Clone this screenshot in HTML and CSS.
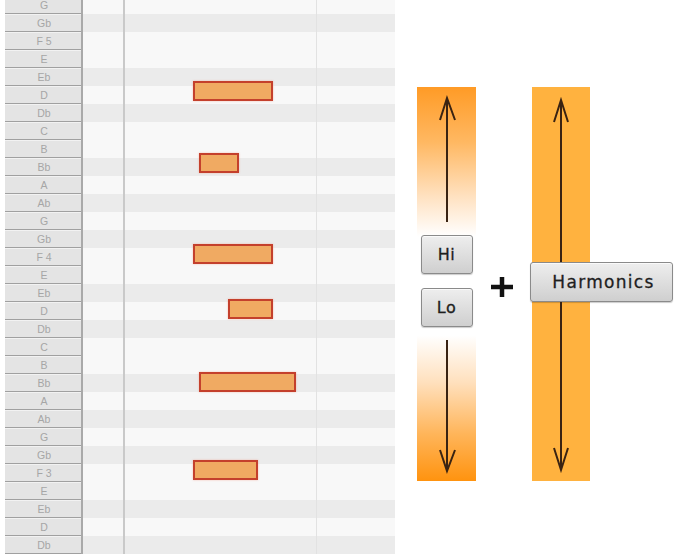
FILE: index.html
```html
<!DOCTYPE html>
<html lang="en">
  <head>
    <meta charset="UTF-8" />
    <meta name="viewport" content="width=device-width, initial-scale=1.0" />
    <title>Piano roll - Hi / Lo + Harmonics</title>
    <link rel="stylesheet" href="styles.css">
  </head>
  <body>
    <div class="page">
      <!-- ========== piano roll ========== -->
      <div class="roll">
        <div class="keys">
          <div class="key">G</div>
          <div class="key">Gb</div>
          <div class="key">F 5</div>
          <div class="key">E</div>
          <div class="key">Eb</div>
          <div class="key">D</div>
          <div class="key">Db</div>
          <div class="key">C</div>
          <div class="key">B</div>
          <div class="key">Bb</div>
          <div class="key">A</div>
          <div class="key">Ab</div>
          <div class="key">G</div>
          <div class="key">Gb</div>
          <div class="key">F 4</div>
          <div class="key">E</div>
          <div class="key">Eb</div>
          <div class="key">D</div>
          <div class="key">Db</div>
          <div class="key">C</div>
          <div class="key">B</div>
          <div class="key">Bb</div>
          <div class="key">A</div>
          <div class="key">Ab</div>
          <div class="key">G</div>
          <div class="key">Gb</div>
          <div class="key">F 3</div>
          <div class="key">E</div>
          <div class="key">Eb</div>
          <div class="key">D</div>
          <div class="key">Db</div>
        </div>

        <div class="grid">
          <div class="row"></div>
          <div class="row dark"></div>
          <div class="row"></div>
          <div class="row"></div>
          <div class="row dark"></div>
          <div class="row"></div>
          <div class="row dark"></div>
          <div class="row"></div>
          <div class="row"></div>
          <div class="row dark"></div>
          <div class="row"></div>
          <div class="row dark"></div>
          <div class="row"></div>
          <div class="row dark"></div>
          <div class="row"></div>
          <div class="row"></div>
          <div class="row dark"></div>
          <div class="row"></div>
          <div class="row dark"></div>
          <div class="row"></div>
          <div class="row"></div>
          <div class="row dark"></div>
          <div class="row"></div>
          <div class="row dark"></div>
          <div class="row"></div>
          <div class="row dark"></div>
          <div class="row"></div>
          <div class="row"></div>
          <div class="row dark"></div>
          <div class="row"></div>
          <div class="row dark"></div>

          <div class="beat beat-1"></div>
          <div class="beat beat-2"></div>

          <!-- notes -->
          <div class="note" style="left: 110px; top: 85px; width: 80px"></div>
          <div class="note" style="left: 116px; top: 157px; width: 40px"></div>
          <div class="note" style="left: 110px; top: 248px; width: 80px"></div>
          <div class="note" style="left: 145px; top: 303px; width: 45px"></div>
          <div class="note" style="left: 116px; top: 376px; width: 97px"></div>
          <div class="note" style="left: 110px; top: 464px; width: 65px"></div>
        </div>
      </div>

      <!-- ========== range controls ========== -->
      <div class="panel">
        <div class="bar bar-range">
          <svg class="arrow-up" width="59" height="148" viewBox="0 0 59 148">
            <path d="M30 11 V135 M23 33 L30 11 L38 33" />
          </svg>
          <button class="btn btn-small">Hi</button>
          <button class="btn btn-small btn-lo">Lo</button>
          <svg class="arrow-down" width="59" height="154" viewBox="0 0 59 154">
            <path d="M30 13 V144 M23 123 L30 144 L38 123" />
          </svg>
        </div>

        <div class="plus">
          <svg width="24" height="22" viewBox="0 0 24 22">
            <path d="M1 11 H23 M12 1 V21" />
          </svg>
        </div>

        <div class="bar bar-flat">
          <svg class="arrow-up" width="58" height="175" viewBox="0 0 58 175">
            <path d="M29 13 V175 M22 35 L29 13 L36 35" />
          </svg>
          <button class="btn btn-wide">Harmonics</button>
          <svg class="arrow-down" width="58" height="179" viewBox="0 0 58 179">
            <path d="M29 0 V168 M22 146 L29 168 L36 146" />
          </svg>
        </div>
      </div>
    </div>
  </body>
</html>
```

FILE: styles.css
```css
* {
  margin: 0;
  padding: 0;
  box-sizing: border-box;
}

body {
  background: #fff;
  font-family: "DejaVu Sans", "Liberation Sans", sans-serif;
  overflow: hidden;
}

.page {
  display: flex;
  align-items: flex-start;
  height: 556px;
}

/* ============== piano roll ============== */
.roll {
  display: flex;
  margin-top: -4px;
  margin-left: 5px;
}

.keys {
  width: 78px;
  border-right: 2px solid #a9a9a9;
}

.key {
  height: 18px;
  background: #e4e4e4;
  border-bottom: 1px solid #a0a0a0;
  border-top: 1px solid #f2f2f2;
  color: #a6a6a6;
  font-family: "Liberation Sans", sans-serif;
  font-size: 10.5px;
  line-height: 16px;
  text-align: center;
  padding-left: 2px;
}

.grid {
  position: relative;
  width: 312px;
}

.row {
  height: 18px;
  background: #f8f8f8;
}

.row.dark {
  background: #ebebeb;
}

.beat {
  position: absolute;
  top: 0;
  bottom: 0;
}

.beat-1 {
  left: 40px;
  width: 2px;
  background: #c9c9c9;
}

.beat-2 {
  left: 233px;
  width: 1px;
  background: #e2e2e2;
}

.note {
  position: absolute;
  height: 20px;
  background: #f0aa62;
  border: 2px solid #c4402c;
  box-shadow: 0 0 2px rgba(240, 90, 60, 0.35);
}

/* ============== panel ============== */
.panel {
  display: flex;
  align-items: flex-start;
  margin-left: 22px;
}

.bar {
  height: 394px;
  margin-top: 87px;
  display: flex;
  flex-direction: column;
  align-items: center;
}

.bar-range {
  width: 59px;
  background: linear-gradient(
    to bottom,
    #ff9b26 0%,
    #ffb862 14%,
    #ffe2c2 28%,
    #fff 38%,
    #fff 63%,
    #ffe0bd 75%,
    #ffb55a 88%,
    #ff930f 100%
  );
}

.bar-flat {
  width: 58px;
  background: #ffb23f;
}

.bar svg {
  display: block;
  flex-shrink: 0;
}

.bar svg path {
  fill: none;
  stroke: #3a2312;
  stroke-width: 2;
}

.btn {
  display: block;
  flex-shrink: 0;
  font-family: "DejaVu Sans", sans-serif;
  color: #1e1e1e;
  background: linear-gradient(to bottom, #eeeeee, #cfcfcf);
  border: 1px solid #8a8a8a;
  border-radius: 3px;
  box-shadow: inset 0 1px 0 #fafafa, 0 1px 1px rgba(0, 0, 0, 0.2);
  -webkit-text-stroke: 0.3px #1e1e1e;
}

.btn-small {
  width: 52px;
  height: 39px;
  font-size: 16px;
  letter-spacing: 0.5px;
}

.btn-lo {
  margin-top: 14px;
}

.btn-wide {
  align-self: flex-start;
  margin-left: -2px;
  width: 143px;
  height: 40px;
  font-size: 17px;
  letter-spacing: 1.3px;
  padding-left: 4px;
}

.plus {
  width: 56px;
  margin-top: 276px;
  padding-left: 14px;
}

.plus svg {
  display: block;
}

.plus path {
  stroke: #111;
  stroke-width: 4.5;
}
```
